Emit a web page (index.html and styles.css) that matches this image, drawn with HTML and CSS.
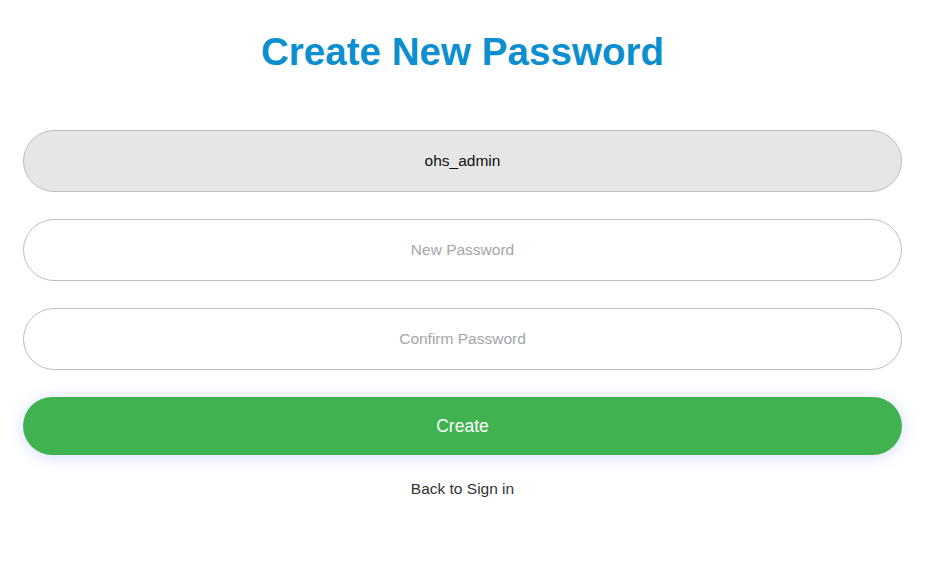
FILE: index.html
```html
<!DOCTYPE html>
<html>
<head>
<meta charset="utf-8">
<title>Create New Password</title>
<link rel="stylesheet" href="styles.css">
</head>
<body>

<div class="reset_wrap">
	<h1 class="reset_title">Create New Password</h1>
	<form class="reset_form">
		<input class="reset_input reset_input_locked" type="text" value="ohs_admin" readonly>
		<input class="reset_input" type="password" placeholder="New Password">
		<input class="reset_input" type="password" placeholder="Confirm Password">
		<button class="reset_btn" type="button">Create</button>
	</form>
	<a class="reset_back" href="#">Back to Sign in</a>
</div>

</body>
</html>
```

FILE: styles.css
```css
*{ margin:0; padding:0; box-sizing:border-box;}
body{
	background:#fff;
	font-family:"Liberation Sans", Arial, sans-serif;
}
.reset_wrap{
	width:879px;
	margin-left:23px;
	padding-top:28px;
	display:flex;
	flex-direction:column;
	align-items:center;
}
.reset_title{
	color:#0b8fd0;
	font-size:38.6px;
	line-height:48px;
	font-weight:bold;
	margin-bottom:54px;
}
.reset_form{
	width:100%;
	display:flex;
	flex-direction:column;
	gap:27px;
}
.reset_input{
	width:100%;
	height:62px;
	border:1px solid #bebebe;
	border-radius:31px;
	background:#fff;
	text-align:center;
	font-family:inherit;
	font-size:15.5px;
	color:#111;
	outline:none;
}
.reset_input::placeholder{
	color:#a3a6aa;
}
.reset_input_locked{
	background:#e6e6e6;
}
.reset_btn{
	width:100%;
	height:58px;
	border:none;
	border-radius:29px;
	background:#40b350;
	color:#fff;
	font-family:inherit;
	font-size:17.5px;
	box-shadow:0 2px 16px rgba(70,110,255,0.22);
}
.reset_back{
	margin-top:24px;
	color:#333;
	font-size:15.5px;
	line-height:20px;
	text-decoration:none;
}
```
